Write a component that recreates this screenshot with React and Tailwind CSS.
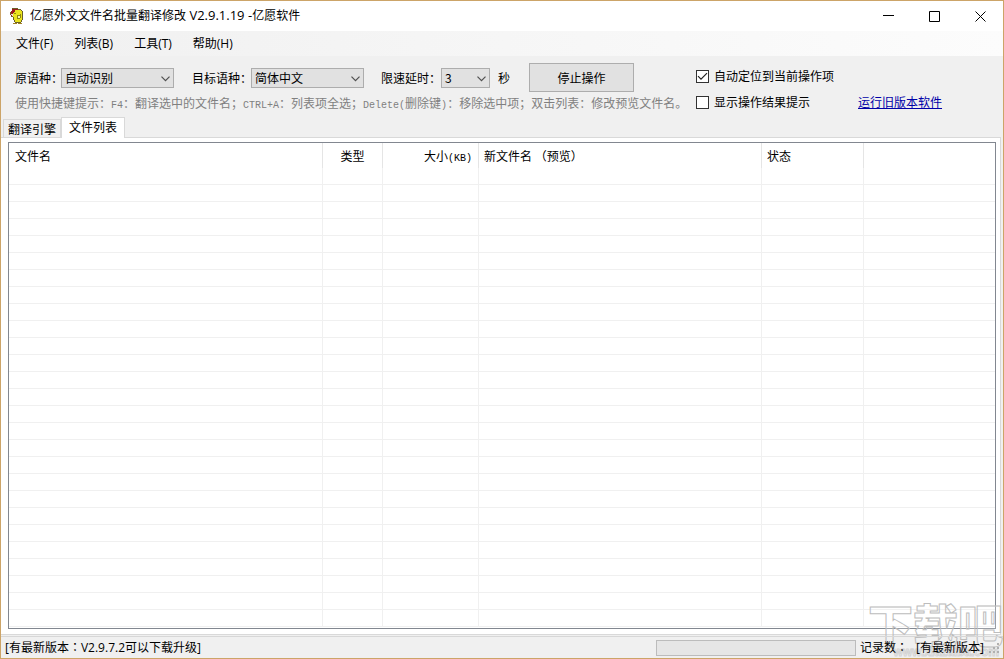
import React from "react";

const menus = ["文件(F)", "列表(B)", "工具(T)", "帮助(H)"];

const columns = [
  { title: "文件名", width: "w-[314px]", align: "text-left pl-[6px]" },
  { title: "类型", width: "w-[60px]", align: "text-center" },
  { title: "大小", unit: "(KB)", width: "w-[96px]", align: "text-right pr-[6px]" },
  { title: "新文件名 （预览）", width: "w-[283px]", align: "text-left pl-[5px]" },
  { title: "状态", width: "w-[102px]", align: "text-left pl-[5px]" },
  { title: "", width: "", align: "" },
];

const rows = Array.from({ length: 27 }, (_, i) => i);

function Mono({ children }) {
  return <span className="font-['Liberation_Mono',monospace] text-[10px] leading-none">{children}</span>;
}

function CenteredColon() {
  return <span lang="zh-TW" className="font-['Noto_Sans_CJK_TC',sans-serif] leading-none">：</span>;
}

function AppIcon() {
  return (
    <svg viewBox="0 0 14 17" className="h-[17px] w-[14px]" shapeRendering="crispEdges" aria-hidden="true">
      <path d="M4 2h7v1h1v9h-1v2H5v-2H4V9H3V5h1z" fill="#e9e31c" />
      <path d="M2 1h6v1H5v2H4v1H3v2H2v1H1V3h1z" fill="#9c1c1c" />
      <path d="M0 4h1v3H0zM1 8h2v1H1zM3 9h1v3H3zM4 12h1v2H4zM5 14h6v1H5zM11 2h1v1h-1zM12 3h1v9h-1zM11 12h1v2h-1zM8 1h3v1H8zM2 0h6v1H2z" fill="#6a6128" />
      <path d="M4 5h2v1H4zM7 7h3v1H7zM7 8h1v3H7zM8 10h2v1H8zM10 6h1v4h-1z" fill="#8c8712" />
      <path d="M8 8h2v2H8z" fill="#f8f6a8" />
      <path d="M3 15h4v1H3zM8 15h4v1H8z" fill="#a17d25" />
      <path d="M1 6h2v1H1zM2 7h1v1H2z" fill="#f3ded8" />
    </svg>
  );
}

function Combo({ id, width, value }) {
  return (
    <span className={"relative block h-5 " + width}>
      <select
        id={id}
        defaultValue={value}
        className="block h-5 w-full appearance-none rounded-none border border-[#adadad] bg-[#e1e1e1] pl-[3px] leading-none text-black"
      >
        <option>{value}</option>
      </select>
      <svg viewBox="0 0 9 6" className="pointer-events-none absolute right-1 top-2 h-[6px] w-[9px]" fill="none" stroke="#505050" strokeWidth="1.2" aria-hidden="true">
        <path d="M.5 .7 4.5 4.7 8.5 .7" />
      </svg>
    </span>
  );
}

function Check({ label, checked }) {
  return (
    <label className="flex h-[26px] items-center gap-[5px] whitespace-nowrap">
      <span className="relative block h-[13px] w-[13px]">
        <input
          type="checkbox"
          defaultChecked={checked}
          className="peer block h-[13px] w-[13px] appearance-none border border-[#333] bg-white"
        />
        <svg viewBox="0 0 13 13" className="pointer-events-none absolute inset-0 hidden h-[13px] w-[13px] peer-checked:block" fill="none" stroke="#222" strokeWidth="1.2" aria-hidden="true">
          <path d="M2 6.2 5 9.2 11 3.2" />
        </svg>
      </span>
      {label}
    </label>
  );
}

function WindowButton({ label, d }) {
  return (
    <button type="button" aria-label={label} className="flex h-full w-[46px] items-center justify-center">
      <svg viewBox="0 0 11 11" className="h-[11px] w-[11px]" fill="none" stroke="#000" aria-hidden="true">
        <path d={d} />
      </svg>
    </button>
  );
}

export default function App() {
  return (
    <div className="relative flex min-h-screen flex-col overflow-hidden border border-[#cca468] bg-[#f0f0f0] font-['Noto_Sans_CJK_SC',sans-serif] text-[12px] leading-4 text-black">
      <header className="flex h-[30px] items-center bg-white">
        <div className="flex flex-1 items-center gap-[6px] pl-[9px] font-['Open_Sans','Noto_Sans_CJK_SC',sans-serif]">
          <AppIcon />
          <h1 className="whitespace-nowrap">亿愿外文文件名批量翻译修改<span className="text-[13px] leading-none"> V2.9.1.19 -</span>亿愿软件</h1>
        </div>
        <WindowButton label="最小化" d="M0 4.5h11" />
        <WindowButton label="最大化" d="M.5 .5h10v10h-10z" />
        <WindowButton label="关闭" d="M.5 .5l10 10M10.5 .5l-10 10" />
      </header>

      <nav className="flex h-[25px] items-center gap-[21px] bg-linear-to-r from-[#f0f0f0] to-[#fcfcfc] pl-[15px] font-['Open_Sans','Noto_Sans_CJK_SC',sans-serif]">
        {menus.map((m) => (
          <button type="button" key={m}>{m}</button>
        ))}
      </nav>

      <form className="flex items-start pb-[2px] pl-[14px] pt-[7px]">
        <div className="mr-[9px] w-[672px] shrink-0">
          <div className="flex h-[29px] items-center">
            <label htmlFor="from" className="w-[46px] whitespace-nowrap">原语种：</label>
            <Combo id="from" width="w-[113px]" value="自动识别" />
            <label htmlFor="to" className="ml-[18px] w-[59px] whitespace-nowrap">目标语种：</label>
            <Combo id="to" width="w-[113px]" value="简体中文" />
            <label htmlFor="delay" className="ml-[17px] w-[60px] whitespace-nowrap">限速延时：</label>
            <Combo id="delay" width="w-[49px]" value="3" />
            <span className="ml-2">秒</span>
            <button type="button" className="ml-[19px] h-[29px] w-[105px] border border-[#adadad] bg-[#e1e1e1]">停止操作</button>
          </div>
          <p className="mt-[3px] whitespace-nowrap text-[#808080]">
            使用快捷键提示：<Mono>F4</Mono>：翻译选中的文件名；<Mono>CTRL+A</Mono>：列表项全选；<Mono>Delete(</Mono>删除键<Mono>)</Mono>：移除选中项；双击列表：修改预览文件名。
          </p>
        </div>
        <div className="shrink-0">
          <Check label="自动定位到当前操作项" checked />
          <Check label="显示操作结果提示" />
        </div>
        <a href="#old" className="ml-6 mt-[31px] whitespace-nowrap text-[#0000a8] underline">运行旧版本软件</a>
      </form>

      <main className="flex flex-1 flex-col">
        <div role="tablist" className="flex items-end pl-[2px]">
          <button type="button" role="tab" aria-selected="false" className="h-[18px] w-[58px] border border-b-0 border-[#d9d9d9] leading-4">翻译引擎</button>
          <button type="button" role="tab" aria-selected="true" className="z-10 -mb-px h-[21px] w-[64px] border border-b-0 border-[#d9d9d9] bg-white pb-[2px]">文件列表</button>
        </div>
        <div className="mr-[2px] flex flex-1 flex-col border border-l-0 border-[#d9d9d9] bg-white pb-[5px] pl-[7px] pr-1 pt-1">
          <div className="flex-1 border border-[#828790]">
            <table className="w-full table-fixed border-separate border-spacing-0">
              <thead>
                <tr className="h-[25px]">
                  {columns.map((c, i) => (
                    <th key={i} scope="col" className={"whitespace-nowrap border-[#e5e5e5] p-0 font-normal not-last:border-r " + c.width + " " + c.align}>
                      {c.title}
                      {c.unit && <Mono>{c.unit}</Mono>}
                    </th>
                  ))}
                </tr>
              </thead>
              <tbody>
                {rows.map((r) => (
                  <tr key={r} className="h-[17px]">
                    {columns.map((c, i) => (
                      <td key={i} className="border-b border-[#f0f0f0] p-0 not-last:border-r" />
                    ))}
                  </tr>
                ))}
              </tbody>
            </table>
          </div>
        </div>
      </main>

      <footer className="z-10 mt-px flex h-[22px] items-center border-t border-[#d7d7d7] pl-1 pr-[3px] pt-px font-['Open_Sans','Noto_Sans_CJK_SC',sans-serif]">
        <span className="flex-1">[有最新版本<CenteredColon />V2.9.7.2可以下载升级]</span>
        <progress
          value="0"
          max="100"
          aria-label="进度"
          className="h-4 w-[200px] appearance-none border border-[#bcbcbc] bg-[#e6e6e6] [&::-webkit-progress-bar]:bg-[#e6e6e6]"
        />
        <span className="ml-1 w-[56px] whitespace-nowrap">记录数<CenteredColon /></span>
        <span className="w-[72px] whitespace-nowrap">[有最新版本]</span>
        <svg viewBox="0 0 12 12" className="h-3 w-3" fill="#b0b0b0" aria-hidden="true">
          <path d="M9 1h2v2H9zM5 5h2v2H5zM9 5h2v2H9zM1 9h2v2H1zM5 9h2v2H5zM9 9h2v2H9z" />
        </svg>
      </footer>

      <div className="pointer-events-none absolute bottom-0 right-0 flex w-[135px] flex-col items-end whitespace-nowrap">
        <span className="text-[45px] font-black leading-[44px] text-white/20 [-webkit-text-stroke:1px_#bdbdbd]">下载吧</span>
        <span className="pr-1 font-['Liberation_Sans',sans-serif] text-[12px] font-bold leading-3 text-white/20 [-webkit-text-stroke:1px_#d4d4d4]">www.xiazaiba.com</span>
      </div>
    </div>
  );
}
